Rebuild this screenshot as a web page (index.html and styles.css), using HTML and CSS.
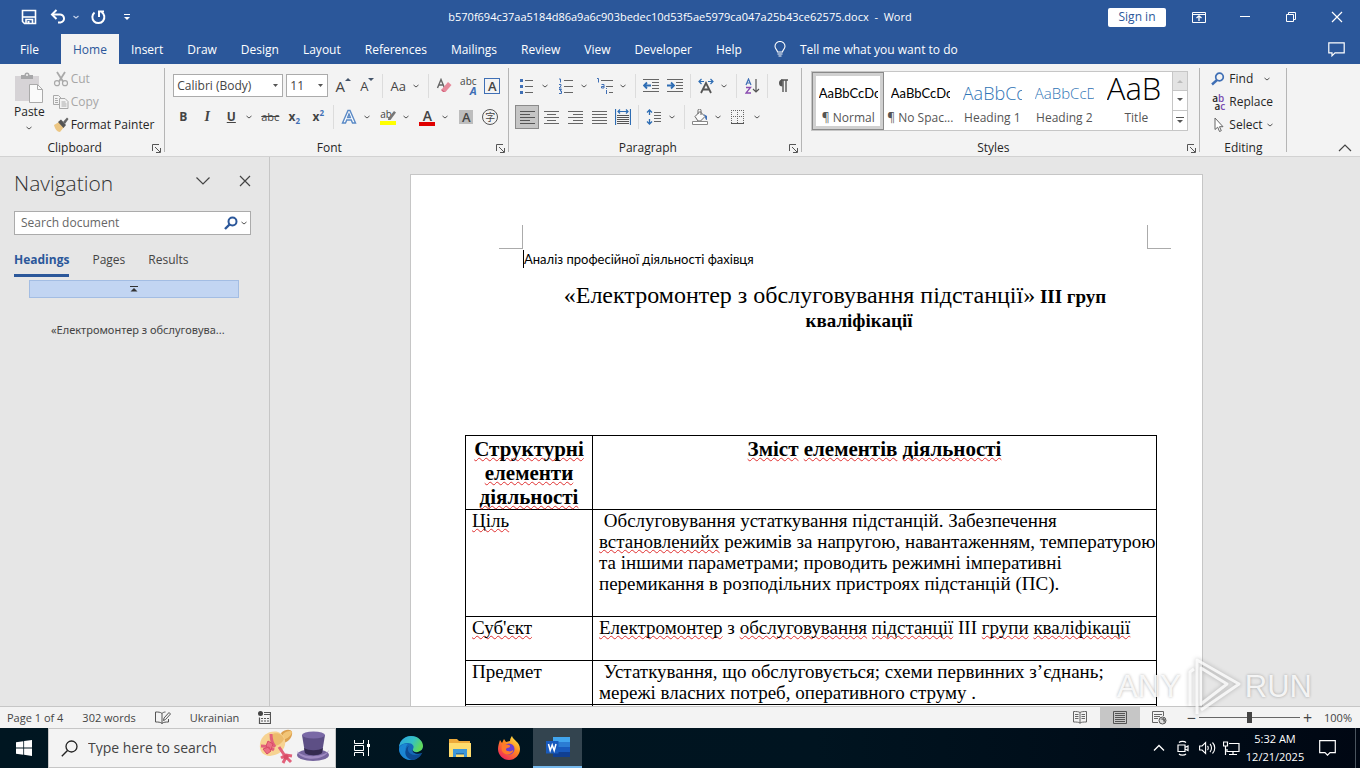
FILE: index.html
```html
<!DOCTYPE html>
<html lang="en">
<head>
    <meta charset="UTF-8">
    <meta name="viewport" content="width=device-width, initial-scale=1.0">
    <title>Word</title>
    <link rel="stylesheet" href="styles.css">
</head>
<body>

    <header class="titlebar">
        <div class="quick">
            <button aria-label="Save"><svg width="16" height="16" viewBox="0 0 16 16"><path d="M1.500 1.500h13v13h-11l-2-2z" fill="none" stroke="#fff" stroke-width="1.600"/><path d="M2 8h12" stroke="#fff" stroke-width="1.600"/><path d="M5 14.500v-4h6.500v4" fill="none" stroke="#fff" stroke-width="1.600"/><path d="M6.500 12h2v2.500h-2z" fill="#fff"/></svg></button>
            <button aria-label="Undo"><svg width="16" height="16" viewBox="0 0 16 16"><path d="M2.500 5.500h7a4 4 0 0 1 1 8H8" fill="none" stroke="#fff" stroke-width="2"/><path d="M6.500 1L2 5.500 6.500 10" fill="none" stroke="#fff" stroke-width="2"/></svg></button>
            <button class="caret" aria-label="Undo list"><svg width="8" height="8" viewBox="0 0 8 8"><path d="M1.500 3l2.500 2 2.500-2" fill="none" stroke="#c5d3ea" stroke-width="1.200"/></svg></button>
            <button aria-label="Redo"><svg width="16" height="16" viewBox="0 0 16 16"><path d="M4.500 3.500a6 6 0 1 0 7-.5" fill="none" stroke="#fff" stroke-width="2"/><path d="M9 8V2.500h5" fill="none" stroke="#fff" stroke-width="2"/></svg></button>
            <button aria-label="Customize"><svg width="8" height="8" viewBox="0 0 8 8"><path d="M1 1.500h6" stroke="#fff"/><path d="M1 4h6L4 7z" fill="#fff"/></svg></button>
        </div>
        <h1 class="doc-name">b570f694c37aa5184d86a9a6c903bedec10d53f5ae5979ca047a25b43ce62575.docx&nbsp; -&nbsp; Word</h1>
        <div class="window-tools">
            <button class="signin">Sign in</button>
            <button aria-label="Ribbon display"><svg width="14" height="12" viewBox="0 0 14 12"><path d="M.5 1.500h13v10H.5zM.5 3.500h13" fill="none" stroke="#fff"/><path d="M7 10V5M4.500 7L7 4.800 9.500 7" fill="none" stroke="#fff" stroke-width="1.300"/></svg></button>
            <button aria-label="Minimize"><svg width="10" height="10" viewBox="0 0 10 10"><path d="M0 4.500h10" stroke="#fff"/></svg></button>
            <button aria-label="Restore"><svg width="10" height="10" viewBox="0 0 10 10"><path d="M.5 2.500h7v7h-7zM2.500 2.500v-2h7v7h-2" fill="none" stroke="#fff"/></svg></button>
            <button aria-label="Close"><svg width="12" height="12" viewBox="0 0 12 12"><path d="M1 1l10 10M11 1L1 11" stroke="#fff" stroke-width="1.200"/></svg></button>
        </div>
    </header>

    <nav class="tabs">
        <a href="#" class="file">File</a>
        <a href="#" class="active">Home</a>
        <a href="#">Insert</a>
        <a href="#">Draw</a>
        <a href="#">Design</a>
        <a href="#">Layout</a>
        <a href="#">References</a>
        <a href="#">Mailings</a>
        <a href="#">Review</a>
        <a href="#">View</a>
        <a href="#">Developer</a>
        <a href="#">Help</a>
        <a href="#" class="tell"><svg width="12" height="16" viewBox="0 0 12 16"><path d="M3.500 11C3.500 9 1 8 1 5.200a5 4.700 0 0 1 10 0C11 8 8.500 9 8.500 11z" fill="none" stroke="#fff" stroke-width="1.100"/><path d="M3.500 13h5M4.500 15h3" stroke="#fff"/></svg>Tell me what you want to do</a>
        <button class="comments" aria-label="Comments"><svg width="17" height="15" viewBox="0 0 17 15"><path d="M.8.8h15.400v10H7l-3 3v-3H.8z" fill="none" stroke="#fff" stroke-width="1.200"/></svg></button>
    </nav>

    <section class="ribbon">
        <div class="group">
            <div class="group-body clipboard">
                <button class="paste">
                    <svg width="30" height="32" viewBox="0 0 30 32"><path d="M1 4h24v25H1z" fill="#d6d3d6"/><path d="M7 7V3h3.500a2.500 2.500 0 0 1 5 0H19v4z" fill="#a7a7a9"/><circle cx="13" cy="3" r="1" fill="#f3f3f3"/><path d="M15.500 12.500h8l5 5v13h-13z" fill="#fafafa" stroke="#aaa"/><path d="M23.500 12.500v5h5" fill="none" stroke="#aaa"/></svg>
                    <span>Paste</span>
                    <svg class="paste-dn" width="8" height="8" viewBox="0 0 8 8"><path d="M1.500 3l2.500 2 2.500-2" fill="none" stroke="#555"/></svg>
                </button>
                <div class="stack">
                    <button class="off"><svg width="16" height="16" viewBox="0 0 16 16"><path d="M4 1l6 9.500M12 1L6 10.500" stroke="#a9a9a9" stroke-width="1.800"/><circle cx="4" cy="12.200" r="2.500" fill="none" stroke="#a9a9a9" stroke-width="1.200"/><circle cx="12" cy="12.200" r="2.500" fill="none" stroke="#a9a9a9" stroke-width="1.200"/></svg>Cut</button>
                    <button class="off"><svg width="16" height="16" viewBox="0 0 16 16"><path d="M6 10.500H.5v-9h5l3 3" fill="none" stroke="#a9a9a9"/><path d="M6.500 4.500h5.500l3 3v7H6.500z" fill="#f3f3f3" stroke="#a9a9a9"/><path d="M2 4.500h2.500M2 6.500h3M2 8.500h3M8.500 8h4M8.500 10h5M8.500 12h5" stroke="#a9a9a9"/></svg>Copy</button>
                    <button><svg width="16" height="16" viewBox="0 0 16 16"><path d="M1 8l5-3 5 5-4 5c-3 0-5-3-6-7z" fill="#ecc683"/><path d="M5 5l3-2.500L13 8l-2.500 3z" fill="#555"/><path d="M10 5l4-4.500 1.500 1.500L12 7z" fill="#666"/></svg>Format Painter</button>
                </div>
            </div>
            <div class="group-label"><span>Clipboard</span><button aria-label="Clipboard options"><svg width="9" height="9" viewBox="0 0 9 9"><path d="M.5 7V.5H7M3 3l5 5M8.500 4v4.500H4" fill="none" stroke="#555"/></svg></button></div>
        </div>

        <div class="group">
            <div class="group-body rows font-rows">
                <div class="row">
                    <select class="font-name" aria-label="Font"><option>Calibri (Body)</option></select>
                    <select class="font-size" aria-label="Font size"><option>11</option></select>
                    <button class="ic" aria-label="Grow font"><span class="grow">A</span><svg class="mark" width="6" height="12" viewBox="0 0 6 12"><path d="M0 3l3-3 3 3z" fill="#44546a"/></svg></button>
                    <button class="ic" aria-label="Shrink font"><span class="shrink">A</span><svg class="mark" width="6" height="12" viewBox="0 0 6 12"><path d="M0 0l3 3 3-3z" fill="#44546a"/></svg></button>
                    <i class="sep"></i>
                    <button class="split" aria-label="Change case"><span class="case">Aa</span><svg class="dn" width="8" height="8" viewBox="0 0 8 8"><path d="M1.500 3l2.500 2 2.500-2" fill="none" stroke="#555"/></svg></button>
                    <i class="sep"></i>
                    <button class="ic" aria-label="Clear formatting"><svg width="16" height="16" viewBox="0 0 16 16"><path d="M1.500 10L5 1.500 8.500 10M2.500 7h5" fill="none" stroke="#666" stroke-width="1.400"/><path d="M6 11l6-7 3.500 3L9.500 14z" fill="#e68a9b"/><path d="M5 12l1-1 3.500 3H7z" fill="#d6607a"/></svg></button>
                    <button class="ic" aria-label="Phonetic guide"><span class="phonetic"><span>abc</span><b>A</b></span></button>
                    <button class="ic" aria-label="Character border"><span class="boxed">A</span></button>
                </div>
                <div class="row shift">
                    <button class="ic" aria-label="Bold"><b>B</b></button>
                    <button class="ic" aria-label="Italic"><em>I</em></button>
                    <button class="split" aria-label="Underline"><span><u>U</u></span><svg class="dn" width="8" height="8" viewBox="0 0 8 8"><path d="M1.500 3l2.500 2 2.500-2" fill="none" stroke="#555"/></svg></button>
                    <button class="ic" aria-label="Strikethrough"><s>abc</s></button>
                    <button class="ic" aria-label="Subscript"><b>x<sub>2</sub></b></button>
                    <button class="ic" aria-label="Superscript"><b>x<sup>2</sup></b></button>
                    <i class="sep"></i>
                    <button class="split" aria-label="Text effects"><svg width="16" height="16" viewBox="0 0 16 16"><path d="M1.500 14L7 1.500h2L14.500 14h-3l-1.200-3H5.700l-1.200 3zM6.600 8.500h2.800L8 5z" fill="#fff" stroke="#5b8ac6" stroke-width="1.400"/></svg><svg class="dn" width="8" height="8" viewBox="0 0 8 8"><path d="M1.500 3l2.500 2 2.500-2" fill="none" stroke="#555"/></svg></button>
                    <button class="split" aria-label="Highlight"><span class="pen"><span>ab</span><svg width="16" height="16" viewBox="0 0 16 16"><path d="M8 9.500l6-7.500 2 1.500-5.500 7.500H8z" fill="#777"/><path d="M0 12h16v4H0z" fill="#ff0"/></svg></span><svg class="dn" width="8" height="8" viewBox="0 0 8 8"><path d="M1.500 3l2.500 2 2.500-2" fill="none" stroke="#555"/></svg></button>
                    <button class="split" aria-label="Font color"><span class="color">A</span><svg class="dn" width="8" height="8" viewBox="0 0 8 8"><path d="M1.500 3l2.500 2 2.500-2" fill="none" stroke="#555"/></svg></button>
                    <button class="ic" aria-label="Character shading"><span class="shaded">A</span></button>
                    <button class="ic" aria-label="Enclose characters"><span class="circled">字</span></button>
                </div>
            </div>
            <div class="group-label"><span>Font</span><button aria-label="Font options"><svg width="9" height="9" viewBox="0 0 9 9"><path d="M.5 7V.5H7M3 3l5 5M8.500 4v4.500H4" fill="none" stroke="#555"/></svg></button></div>
        </div>

        <div class="group">
            <div class="group-body rows para-rows">
                <div class="row">
                    <button class="split" aria-label="Bullets"><svg width="16" height="16" viewBox="0 0 16 16"><path d="M1 1h3v3H1zM1 7h3v3H1zM1 13h3v3H1z" fill="#3f6fb5"/><path d="M6 2.500h8M6 8.500h8M6 14.500h8" stroke="#666"/></svg><svg class="dn" width="8" height="8" viewBox="0 0 8 8"><path d="M1.500 3l2.500 2 2.500-2" fill="none" stroke="#555"/></svg></button>
                    <button class="split" aria-label="Numbering"><svg width="16" height="16" viewBox="0 0 16 16"><path d="M1 1h1.500v3.500M1 6.500h2v1.500L1 10h2.500M1 11.500h2.500L2 13h1.500v2.500H1" fill="none" stroke="#3f6fb5"/><path d="M6 2.500h9M6 8.500h9M6 14.500h9" stroke="#666"/></svg><svg class="dn" width="8" height="8" viewBox="0 0 8 8"><path d="M1.500 3l2.500 2 2.500-2" fill="none" stroke="#555"/></svg></button>
                    <button class="split" aria-label="Multilevel list"><svg width="17" height="16" viewBox="0 0 17 16"><path d="M0 .5h1.500v4M4.500 6.500h2.500v3.500H4.500V8.500H7M9.500 10v1M9.500 12v4" fill="none" stroke="#3f6fb5"/><path d="M4 2.500h12M9 8.500h7M12 14.500h4" stroke="#666"/></svg><svg class="dn" width="8" height="8" viewBox="0 0 8 8"><path d="M1.500 3l2.500 2 2.500-2" fill="none" stroke="#555"/></svg></button>
                    <i class="sep"></i>
                    <button class="ic" aria-label="Decrease indent"><svg width="16" height="14" viewBox="0 0 16 14"><path d="M0 .5h16M9 3.500h7M9 6.500h7M9 9.500h7M0 12.500h16" stroke="#666"/><path d="M8 6.500H1M4 3.500L1 6.500l3 3" fill="none" stroke="#2e6db4" stroke-width="1.800"/></svg></button>
                    <button class="ic" aria-label="Increase indent"><svg width="16" height="14" viewBox="0 0 16 14"><path d="M0 .5h16M9 3.500h7M9 6.500h7M9 9.500h7M0 12.500h16" stroke="#666"/><path d="M0 6.500h7M4 3.500l3 3-3 3" fill="none" stroke="#2e6db4" stroke-width="1.800"/></svg></button>
                    <i class="sep"></i>
                    <button class="split" aria-label="Asian layout"><svg width="16" height="16" viewBox="0 0 16 16"><path d="M3 15L8 5l5 10M5 11.500h6" fill="none" stroke="#555" stroke-width="1.800"/><path d="M6 3.500H1M3.500 1L1 3.500 3.500 6M10 3.500h5M12.500 1L15 3.500 12.500 6" fill="none" stroke="#2e6db4" stroke-width="1.200"/></svg><svg class="dn" width="8" height="8" viewBox="0 0 8 8"><path d="M1.500 3l2.500 2 2.500-2" fill="none" stroke="#555"/></svg></button>
                    <i class="sep"></i>
                    <button class="ic" aria-label="Sort"><svg width="15" height="16" viewBox="0 0 15 16"><path d="M1 7l2.500-6L6 7M2 5h3" fill="none" stroke="#3f6fb5" stroke-width="1.200"/><path d="M1 9.500h4.500L1 15h5" fill="none" stroke="#8a4bb0" stroke-width="1.300"/><path d="M11 1v13M8 11l3 3 3-3" fill="none" stroke="#555" stroke-width="1.200"/></svg></button>
                    <i class="sep"></i>
                    <button class="ic" aria-label="Show marks"><svg width="12" height="14" viewBox="0 0 12 14"><path d="M6 1v12M9 1v12M11 1H4" stroke="#555" stroke-width="1.400"/><path d="M5.500.5a3.500 3.500 0 0 0 0 7z" fill="#555"/></svg></button>
                </div>
                <div class="row">
                    <button class="ic on" aria-label="Align left"><svg width="15" height="13" viewBox="0 0 15 13"><path d="M0 .5h15M0 3.500h10M0 6.500h15M0 9.500h10M0 12.500h15" stroke="#555"/></svg></button>
                    <button class="ic" aria-label="Center"><svg width="15" height="13" viewBox="0 0 15 13"><path d="M0 .5h15M3 3.500h9M0 6.500h15M3 9.500h9M0 12.500h15" stroke="#666"/></svg></button>
                    <button class="ic" aria-label="Align right"><svg width="15" height="13" viewBox="0 0 15 13"><path d="M0 .5h15M5 3.500h10M0 6.500h15M5 9.500h10M0 12.500h15" stroke="#666"/></svg></button>
                    <button class="ic" aria-label="Justify"><svg width="15" height="13" viewBox="0 0 15 13"><path d="M0 .5h15M0 3.500h15M0 6.500h15M0 9.500h15M0 12.500h15" stroke="#666"/></svg></button>
                    <button class="ic" aria-label="Distributed"><svg width="16" height="16" viewBox="0 0 16 16"><path d="M.5 0v16M15.500 0v16M3 2.500h10M5 .5l-2 2 2 2M11 .5l2 2-2 2" fill="none" stroke="#2e6db4" stroke-width="1.200"/><path d="M2 6.500h12M2 8.500h12M2 10.500h12M2 12.500h12M2 14.500h12" stroke="#555"/></svg></button>
                    <i class="sep"></i>
                    <button class="split" aria-label="Line spacing"><svg width="16" height="16" viewBox="0 0 16 16"><path d="M3.500 1v5M1 3.500L3.500 1 6 3.500M3.500 15v-5M1 12.500L3.500 15 6 12.500" fill="none" stroke="#2e6db4" stroke-width="1.300"/><path d="M8 3.500h7M8 6.500h7M8 9.500h7M8 12.500h7" stroke="#666"/></svg><svg class="dn" width="8" height="8" viewBox="0 0 8 8"><path d="M1.500 3l2.500 2 2.500-2" fill="none" stroke="#555"/></svg></button>
                    <i class="sep"></i>
                    <button class="split" aria-label="Shading"><svg width="16" height="16" viewBox="0 0 16 16"><path d="M3 7.500l5-5 5 5-4.500 4.500H6zM6 5V1.500a1.500 1.500 0 0 1 3 0V6" fill="#fafafa" stroke="#666"/><path d="M11.500 5l3.500 2v4c-1.500 0-2-2-2-3.500z" fill="#3f6fb5"/><path d="M.5 12.500h15v3H.5z" fill="#fff" stroke="#888"/></svg><svg class="dn" width="8" height="8" viewBox="0 0 8 8"><path d="M1.500 3l2.500 2 2.500-2" fill="none" stroke="#555"/></svg></button>
                    <button class="split" aria-label="Borders"><svg width="14" height="14" viewBox="0 0 14 14"><path d="M0 .5h13M0 6.500h13M.5 0v13M6.500 0v13M12.500 0v13" stroke="#666" stroke-dasharray="1 1"/><path d="M0 13.500h13" stroke="#555"/></svg><svg class="dn" width="8" height="8" viewBox="0 0 8 8"><path d="M1.500 3l2.500 2 2.500-2" fill="none" stroke="#555"/></svg></button>
                </div>
            </div>
            <div class="group-label"><span>Paragraph</span><button aria-label="Paragraph options"><svg width="9" height="9" viewBox="0 0 9 9"><path d="M.5 7V.5H7M3 3l5 5M8.500 4v4.500H4" fill="none" stroke="#555"/></svg></button></div>
        </div>

        <div class="group">
            <div class="group-body styles">
                <div class="gallery">
                    <button class="style on"><span class="sample">AaBbCcDc</span><span class="style-name">¶ Normal</span></button>
                    <button class="style"><span class="sample">AaBbCcDc</span><span class="style-name">¶ No Spac...</span></button>
                    <button class="style"><span class="sample h1">AaBbCc</span><span class="style-name">Heading 1</span></button>
                    <button class="style"><span class="sample h2">AaBbCcD</span><span class="style-name">Heading 2</span></button>
                    <button class="style"><span class="sample big">AaB</span><span class="style-name">Title</span></button>
                    <div class="gallery-scroll">
                        <button class="dim" aria-label="Scroll up"><svg width="6" height="4" viewBox="0 0 6 4"><path d="M0 4l3-3 3 3z" fill="#bbb"/></svg></button>
                        <button aria-label="Scroll down"><svg width="6" height="4" viewBox="0 0 6 4"><path d="M0 0l3 3 3-3z" fill="#555"/></svg></button>
                        <button aria-label="More styles"><svg width="8" height="7" viewBox="0 0 8 7"><path d="M0 .5h8" stroke="#555"/><path d="M1 3l3 3 3-3z" fill="#555"/></svg></button>
                    </div>
                </div>
            </div>
            <div class="group-label"><span>Styles</span><button aria-label="Style options"><svg width="9" height="9" viewBox="0 0 9 9"><path d="M.5 7V.5H7M3 3l5 5M8.500 4v4.500H4" fill="none" stroke="#555"/></svg></button></div>
        </div>

        <div class="group">
            <div class="group-body editing">
                <div class="stack">
                    <button><svg width="14" height="14" viewBox="0 0 14 14"><circle cx="8.500" cy="5" r="3.800" fill="none" stroke="#3f6fb5" stroke-width="1.700"/><path d="M6 8l-5 4.500" stroke="#3f6fb5" stroke-width="2.400"/></svg>Find<svg class="find-dn" width="8" height="8" viewBox="0 0 8 8"><path d="M1.500 3l2.500 2 2.500-2" fill="none" stroke="#555"/></svg></button>
                    <button><span class="swap"><span>a<i>b</i></span><span>a<i>c</i></span></span>Replace</button>
                    <button><svg width="14" height="16" viewBox="0 0 14 16"><path d="M4 1v11.500l2.700-2.300 1.800 4.300 1.800-.8-1.800-4H12z" fill="#fff" stroke="#666"/></svg>Select<svg width="8" height="8" viewBox="0 0 8 8"><path d="M1.500 3l2.500 2 2.500-2" fill="none" stroke="#555"/></svg></button>
                </div>
            </div>
            <div class="group-label"><span>Editing</span></div>
        </div>
        <button class="collapse" aria-label="Collapse ribbon"><svg width="14" height="8" viewBox="0 0 14 8"><path d="M1 7l6-6 6 6" fill="none" stroke="#444" stroke-width="1.200"/></svg></button>
    </section>

    <main class="workspace">
        <aside class="navpane">
            <div class="nav-head">
                <h2>Navigation</h2>
                <button aria-label="Pane options"><svg width="14" height="8" viewBox="0 0 14 8"><path d="M.5.5L7 7 13.500.5" fill="none" stroke="#444" stroke-width="1.200"/></svg></button>
                <button aria-label="Close pane"><svg width="12" height="12" viewBox="0 0 12 12"><path d="M1 1l10 10M11 1L1 11" stroke="#444" stroke-width="1.200"/></svg></button>
            </div>
            <div class="search">
                <input type="text" placeholder="Search document" aria-label="Search document">
                <button aria-label="Search"><svg width="14" height="14" viewBox="0 0 14 14"><circle cx="8.500" cy="5.500" r="4" fill="none" stroke="#2b579a" stroke-width="2"/><path d="M5.500 8.500L1 13" stroke="#2b579a" stroke-width="2.400"/></svg><svg width="8" height="8" viewBox="0 0 8 8"><path d="M1.500 3l2.500 2 2.500-2" fill="none" stroke="#555"/></svg></button>
            </div>
            <div class="nav-tabs">
                <a href="#" class="active">Headings</a>
                <a href="#">Pages</a>
                <a href="#">Results</a>
            </div>
            <button class="jump" aria-label="Jump to the beginning"><svg width="8" height="7" viewBox="0 0 8 7"><path d="M0 .5h8" stroke="#333"/><path d="M4 2l3.500 3.500h-7z" fill="#333"/></svg></button>
            <a href="#" class="heading-item">«Електромонтер з обслуговува...</a>
        </aside>

        <div class="canvas">
            <article class="page" lang="uk">
                <div class="crops"><i class="crop-left"></i><i class="crop-right"></i></div>
                <p class="intro">Аналіз професійної діяльності фахівця</p>
                <h2 class="doc-title"><span>«Електромонтер з обслуговування підстанції»</span> <b>ІІІ груп кваліфікації</b></h2>
                <table>
                    <thead>
                        <tr>
                            <th class="first"><mark>Структурні</mark> <mark>елементи</mark> <mark>діяльності</mark></th>
                            <th><mark>Зміст</mark> <mark>елементів</mark> <mark>діяльності</mark></th>
                        </tr>
                    </thead>
                    <tbody>
                        <tr>
                            <td><mark>Ціль</mark></td>
                            <td>&nbsp;Обслуговування устаткування підстанцій. Забезпечення<br><mark>встановленийх</mark> режимів за напругою, навантаженням, температурою<br>та іншими параметрами; проводить режимні імперативні<br>перемикання в розподільних пристроях підстанцій (ПС).<br>&nbsp;</td>
                        </tr>
                        <tr>
                            <td><mark>Суб'єкт</mark></td>
                            <td><mark>Електромонтер</mark> з <mark>обслуговування</mark> <mark>підстанції</mark> ІІІ <mark>групи</mark> <mark>кваліфікації</mark><br>&nbsp;</td>
                        </tr>
                        <tr>
                            <td>Предмет</td>
                            <td>&nbsp;Устаткування, що обслуговується; схеми первинних з’єднань;<br>мережі власних потреб, оперативного струму .</td>
                        </tr>
                        <tr>
                            <td>&nbsp;</td>
                            <td>&nbsp;</td>
                        </tr>
                    </tbody>
                </table>
            </article>
        </div>
    </main>

    <footer class="status">
        <span>Page 1 of 4</span>
        <span>302 words</span>
        <button aria-label="Proofing"><svg width="16" height="14" viewBox="0 0 16 14"><path d="M7 2.500C5.500 1 3 1 .5 1v10c2.500 0 5 0 6.500 1.500V2.500C8 1.500 9 1 10.500 1M7 12.500C8.500 11 11 11 13.500 11V8" fill="none" stroke="#555"/><path d="M8.500 9.500l.5-2.500 5-5.500 1.500 1.500-5 5.500z" fill="none" stroke="#555"/></svg></button>
        <span>Ukrainian</span>
        <button aria-label="Macros"><svg width="13" height="13" viewBox="0 0 13 13"><circle cx="2.500" cy="2.500" r="2.500" fill="#444"/><path d="M6 1.500h6.500v11h-11v-6M6 3.500h6.500" fill="none" stroke="#555" stroke-width="1.200"/><path d="M3 7.500h2M6 7.500h2M9 7.500h2M3 10h2M6 10h2M9 10h2" stroke="#555" stroke-width="1.200"/></svg></button>
        <div class="views">
            <button aria-label="Read mode"><svg width="14" height="13" viewBox="0 0 14 13"><path d="M7 1.500v11M.5.500c3 0 5 0 6.500 1 1.500-1 3.500-1 6.500-1v10.500c-3 0-5 0-6.500 1-1.500-1-3.500-1-6.500-1z" fill="none" stroke="#666"/><path d="M2 3.500h3.500M2 5.500h3.500M2 7.500h3.500M8.500 3.500H12M8.500 5.500H12M8.500 7.500H12" stroke="#666"/></svg></button>
            <button class="on" aria-label="Print layout"><svg width="14" height="13" viewBox="0 0 14 13"><path d="M.5.500h13v12H.5z" fill="none" stroke="#555"/><path d="M2 2.500h10M2 4.500h10M2 6.500h10M2 8.500h10M2 10.500h10" stroke="#555"/></svg></button>
            <button aria-label="Web layout"><svg width="15" height="14" viewBox="0 0 15 14"><path d="M6 11.500H.5V.500h11V5" fill="none" stroke="#666"/><path d="M2 3.500h8M2 5.500h6M2 7.500h4" stroke="#666"/><circle cx="10.500" cy="9.500" r="3.500" fill="#ddd" stroke="#555"/><path d="M8 8l3 1 1 3 1.500-3-2-2z" fill="#666"/></svg></button>
        </div>
        <label class="zoom"><span>−</span><input type="range" min="0" max="100" value="50" aria-label="Zoom"><span>+</span></label>
        <span class="percent">100%</span>
    </footer>

    <footer class="taskbar">
        <button class="start" aria-label="Start"><svg width="16" height="16" viewBox="0 0 16 16"><path d="M0 2.300L7.300 1.200v6.300H0zM8.100 1.100L16 0v7.500H8.100zM0 8.400h7.300v6.300L0 13.700zM8.100 8.400H16V16l-7.900-1.200z" fill="#fff"/></svg></button>
        <label class="taskbar-search">
            <svg width="17" height="17" viewBox="0 0 17 17"><circle cx="10.500" cy="6.500" r="5.500" fill="none" stroke="#222" stroke-width="1.300"/><path d="M6.500 10.500L.8 16.200" stroke="#222" stroke-width="1.400"/></svg>
            <input type="text" placeholder="Type here to search">
            <svg width="72" height="38" viewBox="0 0 72 38">
                <path d="M22 4c4-4 10-4 11-1 1 4-3 10-9 11z" fill="#dca04e"/>
                <path d="M24 5c3-3 8-4 9-2-1 4-4 6-9 8z" fill="#f2c577"/>
                <path d="M1 15C2 6 11 1 19 3c6 2 8 8 7 13-2 8-9 10-15 11C4 27 0 22 1 15z" fill="#f7d392"/>
                <path d="M12 6c4-3 11-2 13 4-3 6-8 8-12 6-3-3-3-7-1-10z" fill="#ecbb6c"/>
                <path d="M12 5c0 5 1 9 4 13M2 17c4 0 9 1 13 4" fill="none" stroke="#e2607a" stroke-width="3"/>
                <path d="M4 20l6-2 2 4-4 3zM9 12l5 3-2 6-5-4z" fill="#ec6f83" stroke="#d94b66"/>
                <path d="M20 18l6 9M22 29l5-3 6 1M24 34l3-6 5 5" fill="none" stroke="#e2607a" stroke-width="3"/>
                <circle cx="27" cy="28" r="2.500" fill="#d94b66"/>
                <ellipse cx="54" cy="26" rx="16" ry="6" fill="#75649d"/>
                <path d="M38 22c5 7 27 7 32-1-3 11-29 12-32 1z" fill="#a08bc2"/>
                <path d="M43 6l3 18c4 3 13 3 17 0l3-18z" fill="#5d4f85"/>
                <path d="M45 19c5 3 14 3 19 0l-1 5c-4 3-13 3-17 0z" fill="#352b50"/>
                <ellipse cx="54.500" cy="6" rx="11.500" ry="3.500" fill="#7a69a6"/>
            </svg>
        </label>
        <nav class="apps">
            <button aria-label="Task view"><svg width="18" height="16" viewBox="0 0 18 16"><path d="M1.500 0v3.500h9V0M1.500 16v-3.500h9V16M1.500 5.500h9v5h-9zM15.500 0v16" fill="none" stroke="#fff"/><path d="M14 4h3v3h-3z" fill="#fff"/></svg></button>
            <button aria-label="Edge"><svg width="24" height="24" viewBox="0 0 24 24"><defs><linearGradient id="edge-top" x1="0" y1="0" x2="1" y2="0.400"><stop offset="0" stop-color="#2aa3e0"/><stop offset="0.600" stop-color="#35c1c4"/><stop offset="1" stop-color="#5fd85b"/></linearGradient></defs><circle cx="12" cy="12" r="12" fill="#1468b8"/><path d="M0 11C1 4 6 0 12 0c7 0 12 5 12 10 0 4-3 6-6 6-3 0-5-1-4-3 2-3-1-6-5-6-4 0-8 2-9 4z" fill="url(#edge-top)"/><path d="M9 8c-4 3-4 14 5 16-7 1-14-4-14-11 1-4 5-6 9-5z" fill="#1b86d3"/><path d="M10 10c-3 3 0 9 6 9 3 0 5-1 7-2-2 4-6 7-10 7-5-1-8-6-6-10 0-2 1-3 3-4z" fill="#0d4a92"/><path d="M14 13c-1 3 3 4 5 3 3-1 5-3 5-5v5l-1 1c-5 2-11 0-9-4z" fill="#001621"/></svg></button>
            <button aria-label="File Explorer"><svg width="22" height="20" viewBox="0 0 22 20"><path d="M0 1h8l2 2h11v16H0z" fill="#eda93a"/><path d="M0 5h22v14H0z" fill="#ffdc6d"/><path d="M4 11h14v8h-3v-4H7v4H4z" fill="#3e97d8"/><path d="M7 15h8v1.500H7z" fill="#256fae"/></svg></button>
            <button aria-label="Firefox"><svg width="24" height="24" viewBox="0 0 24 24"><defs><linearGradient id="fox" x1="0.900" y1="0" x2="0.200" y2="1"><stop offset="0" stop-color="#fff44f"/><stop offset="0.450" stop-color="#ff8a1f"/><stop offset="1" stop-color="#ef1f60"/></linearGradient></defs><path d="M3 4l2 3 2-4 2 3 4-1c0-2 1-4 2-5 1 4 8 6 8 13 0 6-5 11-11 11S1 19 1 13c0-3 1-6 2-9z" fill="url(#fox)"/><circle cx="12" cy="13" r="5.500" fill="#6b3fd1"/><path d="M5 8c3-1 5 1 7 1 2 1 1 3-2 3-2 1-1 3 1 3 2 1 4 0 5-1 1 4-8 7-11 1-1-3 0-5 0-7z" fill="#ff7a2a"/></svg></button>
            <button class="active" aria-label="Word"><svg width="24" height="22" viewBox="0 0 24 22"><path d="M7 1h17v5.500H7z" fill="#41a5ee"/><path d="M7 6h17v5H7z" fill="#2b7cd3"/><path d="M7 11h17v5H7z" fill="#185abd"/><path d="M7 16h17v5H7z" fill="#103f91"/><path d="M0 5h12.500v12.500H0z" fill="#185abd"/><path d="M2.500 8l1.700 6.500L6.200 9l2 5.500L10 8" fill="none" stroke="#fff" stroke-width="1.500"/></svg></button>
        </nav>
        <div class="tray">
            <button aria-label="Hidden icons"><svg width="12" height="8" viewBox="0 0 12 8"><path d="M1 6.500l5-5 5 5" fill="none" stroke="#fff" stroke-width="1.300"/></svg></button>
            <button aria-label="Meet now"><svg width="12" height="16" viewBox="0 0 12 16"><path d="M1 5h7v6.500H1zM8 7.500L11 6v4.500L8 9M2 2.500c1.500-1.500 5.500-1.500 7 0M2 14c1.500 1.500 5.500 1.500 7 0" fill="none" stroke="#fff" stroke-width="1.200"/></svg></button>
            <button aria-label="Volume"><svg width="17" height="14" viewBox="0 0 17 14"><path d="M.6 5h2.500l3.500-3.500v11L3.100 9H.6z" fill="none" stroke="#fff" stroke-width="1.100"/><path d="M8.500 5c1 1 1 3 0 4M11 3c2 2 2 6 0 8M13.500 1.500c3 3 3 8 0 11" fill="none" stroke="#fff" stroke-width="1.100"/></svg></button>
            <button aria-label="Network"><svg width="17" height="15" viewBox="0 0 17 15"><path d="M6 2.500h10v8H4V8M10 10.500v3M6 13.500h8M.5 1h4v4h-4zM2.500 5v9" fill="none" stroke="#fff" stroke-width="1.200"/></svg></button>
            <time class="clock"><span>5:32 AM</span><span>12/21/2025</span></time>
            <button class="notify" aria-label="Notifications"><svg width="17" height="16" viewBox="0 0 17 16"><path d="M.7.700h15.600v12H11l-2.500 2.500L6 12.700H.7z" fill="none" stroke="#fff" stroke-width="1.200"/></svg></button>
        </div>
    </footer>

    <div class="watermark">
        <span>ANY</span>
        <svg width="60" height="62" viewBox="0 0 60 62"><g fill="none" stroke="#fff" stroke-opacity="0.800" stroke-width="3" stroke-linejoin="round"><path d="M14 58V4l42 24-38 26"/><path d="M18 12v36l26-20zM7 50V16l4-3"/></g></svg>
        <span>RUN</span>
    </div>

</body>
</html>
```
FILE: styles.css
```css
* {
    box-sizing: border-box;
}

body {
    font-family: 'Open Sans', 'Noto Sans', 'Noto Sans CJK SC', sans-serif;
    font-size: 12px;
    line-height: 16px;
    color: #262626;
    background-color: #e6e6e6;
    margin: 0;
    height: 100vh;
    display: flex;
    flex-direction: column;
    overflow: hidden;
}

button,
input,
select {
    font: inherit;
    color: inherit;
    background: none;
    border: 0;
    border-radius: 0;
    padding: 0;
    margin: 0;
}

button {
    display: flex;
    align-items: center;
    justify-content: center;
}

a {
    color: inherit;
    text-decoration: none;
}

svg {
    flex: none;
}

h1,
h2,
p {
    margin: 0;
    font-weight: normal;
}

/* Title bar */
.titlebar {
    display: grid;
    grid-template-columns: 1fr auto 1fr;
    align-items: center;
    height: 34px;
    flex: none;
    background-color: #2b579a;
    color: white;
}

.quick {
    display: flex;
    align-items: center;
    padding-left: 17px;
}

.quick button {
    width: 24px;
    height: 24px;
    margin-right: 5px;
}

.quick .caret {
    width: 12px;
    margin: 0 4px 0 -5px;
}

.doc-name {
    font-size: 11px;
}

.window-tools {
    display: flex;
    align-items: center;
    justify-content: flex-end;
}

.window-tools button {
    width: 46px;
    height: 30px;
}

.window-tools .signin {
    width: 58px;
    height: 19px;
    margin-right: 10px;
    background-color: white;
    color: #2b579a;
    border-radius: 2px;
}

/* Tabs */
.tabs {
    display: flex;
    height: 30px;
    flex: none;
    background-color: #2b579a;
    color: white;
}

.tabs a {
    padding: 0 12px;
    line-height: 31px;
}

.tabs .file {
    padding: 0 22px 0 20px;
}

.tabs .active {
    background-color: #f3f3f3;
    color: #2b579a;
}

.tabs .tell {
    display: flex;
    align-items: center;
    gap: 14px;
    margin-left: 8px;
}

.comments {
    margin-left: auto;
    padding-right: 15px;
}

/* Ribbon */
.ribbon {
    display: flex;
    height: 93px;
    flex: none;
    background-color: #f3f3f3;
    border-bottom: 1px solid #d2d2d2;
}

.group {
    display: flex;
    flex-direction: column;
    justify-content: space-between;
    border-right: 1px solid #b5b5b5;
    margin: 4px 0;
    flex: none;
}

.group-label {
    display: flex;
    align-items: center;
    height: 8px;
    line-height: 8px;
}

.group-label span {
    flex: 1;
    text-align: center;
}

.group-label button {
    width: 15px;
}

.clipboard {
    display: flex;
    height: 72px;
    padding: 0 10px 0 14px;
}

.paste {
    flex-direction: column;
    justify-content: flex-start;
    margin-right: 8px;
    padding-top: 4px;
}

.paste-dn {
    margin-top: 4px;
}

.stack {
    display: flex;
    flex-direction: column;
    gap: 1px;
}

.stack button {
    height: 22px;
    gap: 2px;
    justify-content: flex-start;
}

.stack .off {
    color: #a6a6a6;
}

.rows {
    display: flex;
    flex-direction: column;
    gap: 7px;
    padding-top: 6px;
}

.font-rows {
    padding-left: 8px;
    padding-right: 4px;
}

.para-rows {
    padding-left: 6px;
    padding-right: 6px;
}

.row {
    display: flex;
    height: 24px;
    color: #444;
}

.shift {
    margin-left: -2px;
}

.ic {
    width: 24px;
    height: 24px;
}

.ic.on {
    background-color: #c5c5c5;
    border: 1px solid #8a8a8a;
}

.split {
    width: 36px;
    height: 24px;
    margin: 0 2px 0 1px;
    justify-content: space-between;
    padding: 0 3px;
}

.split span {
    width: 16px;
    text-align: center;
}

.sep {
    width: 1px;
    margin: 0 3px;
    background-color: #dcdcdc;
}

select {
    appearance: none;
    height: 23px;
    margin-right: 3px;
    padding: 0 3px;
    background: white url("data:image/svg+xml,%3Csvg xmlns='http://www.w3.org/2000/svg' width='5' height='3'%3E%3Cpath d='M0 0h5L2.500 3z' fill='%23555'/%3E%3C/svg%3E") no-repeat right 4px center;
    border: 1px solid #ababab;
}

.font-name {
    width: 110px;
}

.font-size {
    width: 42px;
}

.grow {
    font-size: 15px;
}

.shrink {
    font-size: 13px;
}

.mark {
    align-self: flex-start;
    margin-top: 4px;
}

.case {
    font-size: 13px;
}

.phonetic {
    display: flex;
    flex-direction: column;
    align-items: center;
    font-size: 10px;
    line-height: 9px;
}

.phonetic b {
    font-size: 11px;
    font-style: italic;
    color: #3f6fb5;
    align-self: flex-end;
}

.boxed {
    width: 16px;
    font-size: 13px;
    font-weight: 600;
    line-height: 14px;
    border: 1px solid #3f6fb5;
}

.row em {
    font-family: 'Liberation Serif', serif;
    font-size: 14px;
    font-weight: bold;
}

.row u {
    font-weight: bold;
}

.row s {
    font-size: 11px;
}

sub,
sup {
    font-size: 8px;
    line-height: 0;
    color: #3f6fb5;
}

.pen {
    display: grid;
    font-size: 10px;
    line-height: 10px;
}

.pen > * {
    grid-area: 1 / 1;
}

.pen > span {
    width: 11px;
}

.color {
    font-size: 14px;
    font-weight: 600;
    line-height: 13px;
    border-bottom: 4px solid #e00000;
}

.shaded {
    width: 14px;
    font-weight: 600;
    font-size: 13px;
    line-height: 14px;
    background-color: #bdbdbd;
}

.circled {
    width: 16px;
    font-size: 10px;
    line-height: 14px;
    border: 1px solid #555;
    border-radius: 50%;
}

.styles {
    padding: 3px 11px 0 9px;
}

.gallery {
    display: flex;
    height: 60px;
    background-color: white;
    border: 1px solid #c6c6c6;
}

.style {
    width: 72px;
    flex-direction: column;
    justify-content: flex-end;
    overflow: hidden;
    padding: 0 6px 4px;
}

.style.on {
    border: 1px solid #8a8a8a;
    box-shadow: inset 0 0 0 3px #d0d0d0;
    padding: 0 5px 3px;
}

.sample {
    width: 59px;
    height: 33px;
    line-height: 32px;
    overflow: hidden;
    font-family: 'Lato', sans-serif;
    font-size: 13px;
    color: black;
    text-align: left;
    white-space: nowrap;
}

.h1,
.h2 {
    color: #2e74b5;
    font-family: 'Open Sans', sans-serif;
    font-weight: 300;
    font-size: 18px;
}

.h2 {
    font-size: 15px;
}

.big {
    font-family: 'Open Sans', sans-serif;
    font-weight: 300;
    font-size: 31px;
    line-height: 22px;
}

.style-name {
    color: #555;
    white-space: nowrap;
}

.gallery-scroll {
    display: grid;
    grid-template-rows: 1fr 1fr 1fr;
    border-left: 1px solid #c6c6c6;
}

.gallery-scroll button {
    width: 14px;
    border-bottom: 1px solid #c6c6c6;
}

.gallery-scroll button:last-child {
    border-bottom: 0;
}

.gallery-scroll .dim {
    background-color: #e3e3e3;
}

.editing {
    padding: 0 12px 0 11px;
}

.editing .stack button {
    gap: 4px;
}

.find-dn {
    margin-left: 6px;
}

.swap {
    width: 14px;
    display: flex;
    flex-direction: column;
    font-size: 10px;
    font-weight: 600;
    line-height: 8px;
}

.swap span:last-child {
    align-self: flex-end;
}

.swap i {
    font-style: normal;
    color: #7a4bb0;
}

.collapse {
    margin: auto 8px 4px auto;
}

/* Workspace */
.workspace {
    display: flex;
    flex: 1;
    min-height: 0;
    overflow: hidden;
}

.navpane {
    width: 270px;
    flex: none;
    padding: 12px 18px 0 14px;
    border-right: 1px solid #c6c6c6;
    color: #444;
}

.nav-head {
    display: flex;
    align-items: center;
    margin-bottom: 13px;
}

.nav-head h2 {
    flex: 1;
    font-size: 21px;
    line-height: 29px;
    font-weight: 300;
    color: #333;
}

.nav-head button {
    width: 41px;
    justify-content: flex-end;
    margin-bottom: 6px;
}

.search {
    display: flex;
    height: 24px;
    background-color: white;
    border: 1px solid #ababab;
}

.search input {
    flex: 1;
    min-width: 0;
    padding: 0 6px;
}

.search input::placeholder {
    color: #666;
}

.search button {
    gap: 2px;
    padding-right: 2px;
}

.nav-tabs {
    display: flex;
    gap: 23px;
    margin: 17px 0 3px;
}

.nav-tabs a {
    padding-bottom: 6px;
}

.nav-tabs .active {
    color: #2b579a;
    font-weight: bold;
    border-bottom: 3px solid #2b579a;
}

.jump {
    width: 210px;
    height: 18px;
    margin-left: 15px;
    background-color: #c2d5f2;
    border: 1px solid #a3bde3;
}

.heading-item {
    display: block;
    margin: 24px 0 0 37px;
    font-family: 'Noto Sans', sans-serif;
    font-size: 11px;
    white-space: nowrap;
}

.canvas {
    flex: 1;
    padding: 17px 17px 0 0;
}

.page {
    max-width: 793px;
    height: 1122px;
    margin: 0 auto;
    padding-top: 50px;
    background-color: white;
    border: 1px solid #c6c6c6;
    font-family: 'Liberation Serif', serif;
    font-size: 19px;
    line-height: 21px;
    color: black;
}

.crops {
    display: flex;
    justify-content: space-between;
    padding: 0 31px 0 88px;
}

.crops i {
    width: 24px;
    height: 24px;
    border-bottom: 1px solid #ababab;
}

.crop-left {
    border-right: 1px solid #ababab;
}

.crop-right {
    border-left: 1px solid #ababab;
}

.intro {
    margin: 1px 55px 0 112px;
    border-left: 1px solid black;
    font-family: 'Lato', 'Open Sans', sans-serif;
    font-size: 13px;
    line-height: 18px;
}

.doc-title {
    margin: 15px 55px 102px 112px;
    padding-left: 48px;
    text-indent: -48px;
    text-align: center;
    font-size: 19px;
    line-height: 24px;
}

.doc-title span {
    font-size: 24px;
}

table {
    width: calc(100% - 99px);
    margin-left: 54px;
    border-collapse: collapse;
}

th,
td {
    border: 1px solid black;
    text-align: left;
    vertical-align: top;
}

td {
    padding: 0 0 1px 6px;
    white-space: nowrap;
}

th {
    height: 74px;
    padding: 1px 0 0;
    font-size: 21px;
    line-height: 24px;
    text-align: center;
}

.first {
    width: 127px;
}

mark {
    background: none;
    color: inherit;
    text-decoration: underline wavy #e03030 1px;
    text-decoration-skip-ink: none;
    text-underline-offset: 1px;
}

/* Status bar */
.status {
    display: flex;
    align-items: center;
    height: 22px;
    flex: none;
    gap: 19px;
    padding: 0 8px 0 7px;
    font-size: 11px;
    color: #444;
    background-color: #f3f3f3;
    border-top: 1px solid #c6c6c6;
}

.views {
    display: flex;
    align-self: stretch;
    margin-left: auto;
}

.views button {
    width: 40px;
}

.views .on {
    background-color: #c6c6c6;
}

.zoom {
    display: flex;
    align-items: center;
    gap: 3px;
    margin: 0 -7px 0 -12px;
    font-size: 16px;
}

.zoom input {
    appearance: none;
    width: 101px;
    height: 12px;
    background: linear-gradient(#666, #666) no-repeat center / 100% 1px;
}

.zoom input::-webkit-slider-thumb {
    appearance: none;
    width: 5px;
    height: 11px;
    background-color: #444;
}

/* Taskbar */
.taskbar {
    display: flex;
    height: 40px;
    flex: none;
    background: linear-gradient(90deg, #001621, #001420 60%, #000713);
    color: white;
}

.start {
    width: 48px;
}

.taskbar-search {
    display: flex;
    align-items: center;
    width: 288px;
    padding: 0 4px 0 12px;
    background-color: #f3f3f3;
    border: 1px solid #c6c6c6;
    color: #444;
}

.taskbar-search input {
    flex: 1;
    min-width: 0;
    padding-left: 10px;
    font-size: 14px;
}

.taskbar-search input::placeholder {
    color: #444;
}

.apps {
    display: flex;
    padding-left: 1px;
}

.apps button {
    width: 49px;
}

.apps .active {
    background-color: #33444f;
    border-bottom: 2px solid #76b9ed;
}

.tray {
    display: flex;
    align-items: center;
    margin-left: auto;
    margin-right: 4px;
    padding-right: 7px;
    border-right: 1px solid #4a545e;
}

.tray button {
    width: 24px;
    height: 40px;
}

.clock {
    display: flex;
    flex-direction: column;
    align-items: center;
    width: 64px;
    font-size: 11px;
    line-height: 18px;
}

.tray .notify {
    width: 41px;
}

/* Watermark over the corner of the window */
.watermark {
    position: absolute;
    right: 48px;
    bottom: 50px;
    display: flex;
    align-items: center;
    gap: 2px;
    font-family: 'Liberation Sans Narrow', 'Liberation Sans', sans-serif;
    font-size: 31px;
    line-height: 62px;
    color: rgba(255, 255, 255, 0.85);
    text-shadow: 0 0 3px rgba(0, 0, 0, 0.3);
    pointer-events: none;
}

.watermark svg {
    filter: drop-shadow(0 0 2px rgba(0, 0, 0, 0.3));
}
```
